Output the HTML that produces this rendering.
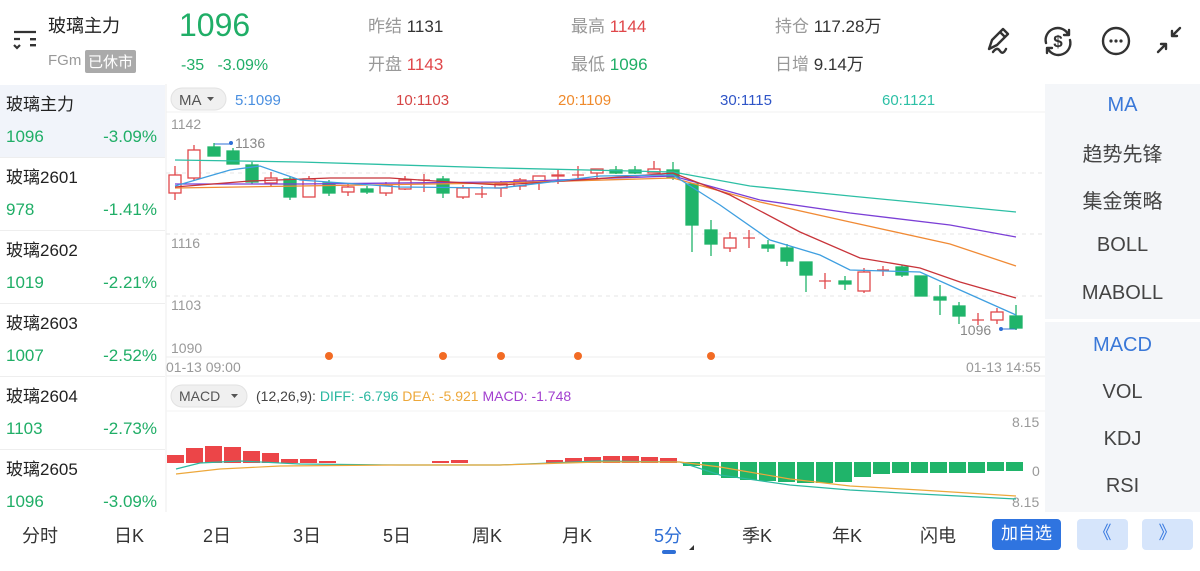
<!DOCTYPE html>
<html><head><meta charset="utf-8"><style>
*{margin:0;padding:0;box-sizing:border-box}
body{width:1200px;height:571px;background:#fff;font-family:"Liberation Sans","Noto Sans CJK SC",sans-serif;position:relative;overflow:hidden;color:#333}
.a{position:absolute;white-space:nowrap}
.g{color:#20ae67}.r{color:#e0474a}.gy{color:#999}
.sb{position:absolute;left:0;width:165px;height:73px;border-bottom:1px solid #eee}
.sb .n{position:absolute;left:6px;top:5px;font-size:17px;color:#222}
.sb .p{position:absolute;left:6px;top:42px;font-size:17px;color:#20ae67}
.sb .c{position:absolute;right:8px;top:42px;font-size:17px;color:#20ae67}
.rp{position:absolute;left:1045px;width:155px;text-align:center;font-size:20px;color:#444}
.tab{position:absolute;top:522px;font-size:18px;color:#333}
</style></head><body>
<!-- header -->
<svg class="a" style="left:12px;top:28px" width="26" height="22" viewBox="0 0 26 22"><path d="M2 4h22M2 11h6M2 17l3 3 3-3" stroke="#333" stroke-width="2.2" fill="none"/><rect x="18" y="10" width="6" height="2.4" fill="#333"/><rect x="18" y="16" width="6" height="2.4" fill="#333"/></svg>
<div class="a" style="left:48px;top:12px;font-size:18px;color:#222">玻璃主力</div>
<div class="a gy" style="left:48px;top:52px;font-size:15px">FGm</div>
<div class="a" style="left:85px;top:50px;font-size:15px;color:#fff;background:#aaa;padding:1px 3px;border-radius:2px">已休市</div>
<div class="a g" style="left:179px;top:7px;font-size:32px">1096</div>
<div class="a g" style="left:181px;top:57px;font-size:16px">-35&nbsp;&nbsp;&nbsp;-3.09%</div>
<div class="a" style="left:368px;top:12px;font-size:17px"><span class="gy">昨结</span> 1131</div>
<div class="a" style="left:368px;top:50px;font-size:17px"><span class="gy">开盘</span> <span class="r">1143</span></div>
<div class="a" style="left:571px;top:12px;font-size:17px"><span class="gy">最高</span> <span class="r">1144</span></div>
<div class="a" style="left:571px;top:50px;font-size:17px"><span class="gy">最低</span> <span class="g">1096</span></div>
<div class="a" style="left:775px;top:12px;font-size:17px"><span class="gy">持仓</span> 117.28万</div>
<div class="a" style="left:775px;top:50px;font-size:17px"><span class="gy">日增</span> 9.14万</div>
<svg class="a" style="left:985px;top:22px" width="200" height="36" viewBox="0 0 200 36">
<g stroke="#333" stroke-width="2.4" fill="none" stroke-linecap="round" stroke-linejoin="round">
<path d="M4 27l3-9 11-11 5 5-11 11zM15 10l5 5M8 30c3-4 5-4 7-1s4 2 6-2"/>
<path d="M61 21A12 12 0 0 1 83 12M84 8v5h-5"/>
<path d="M85 18A12 12 0 0 1 63 27M62 31v-5h5"/>
<circle cx="131" cy="19" r="13"/>
<path d="M173 30l8-8M176 22h5v5M195 6l-8 8M187 9v5h5"/>
</g>
<text x="73" y="25" font-size="17" font-weight="bold" fill="#333" text-anchor="middle" font-family="Liberation Sans">$</text>
<circle cx="126" cy="19" r="1.6" fill="#333"/><circle cx="131" cy="19" r="1.6" fill="#333"/><circle cx="136" cy="19" r="1.6" fill="#333"/>
</svg>
<!-- sidebar -->
<div class="sb" style="top:85px;background:#f1f4fa"><div class="n">玻璃主力</div><div class="p">1096</div><div class="c">-3.09%</div></div>
<div class="sb" style="top:158px"><div class="n">玻璃2601</div><div class="p">978</div><div class="c">-1.41%</div></div>
<div class="sb" style="top:231px"><div class="n">玻璃2602</div><div class="p">1019</div><div class="c">-2.21%</div></div>
<div class="sb" style="top:304px"><div class="n">玻璃2603</div><div class="p">1007</div><div class="c">-2.52%</div></div>
<div class="sb" style="top:377px"><div class="n">玻璃2604</div><div class="p">1103</div><div class="c">-2.73%</div></div>
<div class="sb" style="top:450px;height:62px;border:none"><div class="n">玻璃2605</div><div class="p">1096</div><div class="c">-3.09%</div></div>
<!-- right panel -->
<div class="a" style="left:1045px;top:84px;width:155px;height:428px;background:#f4f6f9"></div>
<div class="a" style="left:1045px;top:319px;width:155px;height:3px;background:#fff"></div>
<div class="rp" style="top:94px;color:#3a78d8">MA</div>
<div class="rp" style="top:138px">趋势先锋</div>
<div class="rp" style="top:185px">集金策略</div>
<div class="rp" style="top:234px">BOLL</div>
<div class="rp" style="top:282px">MABOLL</div>
<div class="rp" style="top:334px;color:#3a78d8">MACD</div>
<div class="rp" style="top:381px">VOL</div>
<div class="rp" style="top:428px">KDJ</div>
<div class="rp" style="top:475px">RSI</div>
<!-- chart -->
<svg class="a" style="left:0;top:0" width="1045" height="512" viewBox="0 0 1045 512" font-family="Liberation Sans">
<line x1="166" y1="84" x2="166" y2="512" stroke="#eee"/>
<line x1="166" y1="112" x2="1045" y2="112" stroke="#f0f0f0"/>
<g stroke="#e6e6e6" stroke-dasharray="4 4"><line x1="166" y1="234" x2="1045" y2="234"/><line x1="166" y1="296" x2="1045" y2="296"/><line x1="166" y1="173" x2="1045" y2="173"/></g>
<line x1="166" y1="357" x2="1045" y2="357" stroke="#eee"/>
<line x1="166" y1="376" x2="1045" y2="376" stroke="#eee"/>
<line x1="166" y1="411" x2="1045" y2="411" stroke="#f3f3f3"/>
<rect x="171" y="88" width="55" height="22" rx="11" fill="#f0f0f0" stroke="#e2e2e2"/>
<text x="179" y="105" font-size="15" fill="#555">MA</text><path d="M207 97h7l-3.5 4z" fill="#555"/>
<text x="235" y="105" font-size="15" fill="#4a8fe0">5:1099</text>
<text x="396" y="105" font-size="15" fill="#d64545">10:1103</text>
<text x="558" y="105" font-size="15" fill="#ef8a2c">20:1109</text>
<text x="720" y="105" font-size="15" fill="#2f55c7">30:1115</text>
<text x="882" y="105" font-size="15" fill="#2dc0a6">60:1121</text>
<g font-size="14" fill="#999"><text x="171" y="129">1142</text><text x="171" y="248">1116</text><text x="171" y="310">1103</text><text x="171" y="353">1090</text>
<text x="166" y="372">01-13 09:00</text><text x="966" y="372">01-13 14:55</text><text x="235" y="148" fill="#888">1136</text><text x="960" y="335" fill="#888">1096</text></g>
<path d="M214 148v-4h17" stroke="#2f6fd6" fill="none"/><circle cx="231" cy="143" r="2" fill="#2f6fd6"/>
<path d="M1001 329h16" stroke="#2f6fd6"/><circle cx="1001" cy="329" r="2" fill="#2f6fd6"/>
<g stroke="#e0474a" fill="#fff" stroke-width="1.3">
<path d="M175 166v34M194 145v35M271 172v14M309 176v21M348 184v12M386 182v14M405 176v14M424 174v18M463 185v14M482 186v12M501 181v16M520 178v12M539 176v14M558 170v14M578 166v14M597 172v6M654 161v12M730 232v20M749 230v18M825 273v16M864 268v25M883 266v10M978 313v12M997 308v16"/>
<rect x="169" y="175" width="12" height="18"/><rect x="188" y="150" width="12" height="28"/><rect x="265" y="178" width="12" height="5"/><rect x="303" y="179" width="12" height="18"/><rect x="342" y="187" width="12" height="5"/><rect x="380" y="185" width="12" height="8"/><rect x="399" y="180" width="12" height="9"/><rect x="457" y="188" width="12" height="9"/><rect x="495" y="184" width="12" height="4"/><rect x="514" y="180" width="12" height="6"/><rect x="533" y="176" width="12" height="6"/><rect x="552" y="175" width="12" height="1"/><rect x="591" y="169" width="12" height="4"/><rect x="648" y="169" width="12" height="4"/><rect x="724" y="238" width="12" height="10"/><rect x="858" y="272" width="12" height="19"/><rect x="991" y="312" width="12" height="8"/>
<path d="M418 180h12M437 192h12M475 194h12M572 175h12M743 238h12M819 281h12M877 270h12M972 320h12"/>
</g>
<g stroke="#20b46a" fill="#20b46a" stroke-width="1.3">
<path d="M214 143v10M233 148v16M252 162v22M290 176v24M329 180v16M367 186v8M443 176v22M616 166v8M635 166v8M673 162v18M692 184v68M711 220v36M768 240v12M787 244v22M806 262v30M845 276v14M902 265v12M940 285v30M959 302v22M1016 305v25"/>
<rect x="208" y="147" width="12" height="9"/><rect x="227" y="151" width="12" height="13"/><rect x="246" y="165" width="12" height="17"/><rect x="284" y="179" width="12" height="18"/><rect x="323" y="183" width="12" height="10"/><rect x="361" y="189" width="12" height="3"/><rect x="437" y="179" width="12" height="14"/><rect x="610" y="170" width="12" height="3"/><rect x="629" y="170" width="12" height="3"/><rect x="667" y="170" width="12" height="7"/><rect x="686" y="184" width="12" height="41"/><rect x="705" y="230" width="12" height="14"/><rect x="762" y="245" width="12" height="3"/><rect x="781" y="248" width="12" height="13"/><rect x="800" y="262" width="12" height="13"/><rect x="839" y="281" width="12" height="3"/><rect x="896" y="267" width="12" height="8"/><rect x="915" y="276" width="12" height="20"/><rect x="934" y="297" width="12" height="3"/><rect x="953" y="306" width="12" height="10"/><rect x="1010" y="316" width="12" height="12"/>
</g>
<g fill="none" stroke-width="1.3">
<polyline stroke="#2dbfa5" points="175,160 300,162 500,168 673,172 750,186 850,196 1016,212"/>
<polyline stroke="#7b3fd6" points="175,184 300,184 500,182 673,176 760,200 850,213 950,225 1016,237"/>
<polyline stroke="#f08a35" points="175,188 300,186 500,183 673,178 760,202 850,222 950,244 1016,266"/>
<polyline stroke="#c8343a" points="175,187 250,181 330,178 390,178 450,182 500,185 580,180 673,173 730,195 800,232 860,258 920,268 960,282 1016,298"/>
<polyline stroke="#3f9fe0" points="175,186 230,170 260,166 300,180 400,187 500,188 600,176 673,175 720,205 770,240 820,255 850,270 920,272 960,290 1016,315"/>
</g>
<g fill="#f26b24"><circle cx="329" cy="356" r="4"/><circle cx="443" cy="356" r="4"/><circle cx="501" cy="356" r="4"/><circle cx="578" cy="356" r="4"/><circle cx="711" cy="356" r="4"/></g>
<rect x="171" y="385" width="76" height="22" rx="11" fill="#f0f0f0" stroke="#e2e2e2"/>
<text x="179" y="401" font-size="14" fill="#555">MACD</text><path d="M231 394h7l-3.5 4z" fill="#555"/>
<text x="256" y="401" font-size="14"><tspan fill="#444">(12,26,9): </tspan><tspan fill="#2bb8a0">DIFF: -6.796 </tspan><tspan fill="#eda83b">DEA: -5.921 </tspan><tspan fill="#a23fcf">MACD: -1.748</tspan></text>
<g font-size="14" fill="#999"><text x="1012" y="427">8.15</text><text x="1032" y="476">0</text><text x="1012" y="507">8.15</text></g>
<g fill="#ec4548">
<rect x="167" y="455" width="17" height="8"/><rect x="186" y="448" width="17" height="15"/><rect x="205" y="446" width="17" height="17"/><rect x="224" y="447" width="17" height="16"/><rect x="243" y="451" width="17" height="12"/><rect x="262" y="453" width="17" height="10"/><rect x="281" y="459" width="17" height="4"/><rect x="300" y="459" width="17" height="4"/><rect x="319" y="461" width="17" height="2"/><rect x="432" y="461" width="17" height="2"/><rect x="451" y="460" width="17" height="3"/><rect x="546" y="460" width="17" height="3"/><rect x="565" y="458" width="17" height="5"/><rect x="584" y="457" width="17" height="6"/><rect x="603" y="456" width="17" height="7"/><rect x="622" y="456" width="17" height="7"/><rect x="641" y="457" width="17" height="6"/><rect x="660" y="458" width="17" height="5"/>
</g>
<g fill="#20b46a">
<rect x="683" y="462" width="17" height="4"/><rect x="702" y="462" width="17" height="13"/><rect x="721" y="462" width="17" height="16"/><rect x="740" y="462" width="17" height="18"/><rect x="759" y="462" width="17" height="19"/><rect x="778" y="462" width="17" height="20"/><rect x="797" y="462" width="17" height="21"/><rect x="816" y="462" width="17" height="21"/><rect x="835" y="462" width="17" height="20"/><rect x="854" y="462" width="17" height="15"/><rect x="873" y="462" width="17" height="12"/><rect x="892" y="462" width="17" height="11"/><rect x="911" y="462" width="17" height="11"/><rect x="930" y="462" width="17" height="11"/><rect x="949" y="462" width="17" height="11"/><rect x="968" y="462" width="17" height="11"/><rect x="987" y="462" width="17" height="9"/><rect x="1006" y="462" width="17" height="9"/>
</g>
<polyline fill="none" stroke="#2bb8a0" stroke-width="1.2" points="176,469 200,463 240,461 300,464 400,465 500,465 600,461 680,462 720,475 790,485 850,490 920,494 1016,499"/>
<polyline fill="none" stroke="#eda83b" stroke-width="1.2" points="176,474 220,469 280,466 400,465 500,465 600,462 680,462 720,467 790,479 850,486 920,490 1016,496"/>
</svg>
<div class="tab" style="left:22px">分时</div>
<div class="tab" style="left:114px">日K</div>
<div class="tab" style="left:203px">2日</div>
<div class="tab" style="left:293px">3日</div>
<div class="tab" style="left:383px">5日</div>
<div class="tab" style="left:472px">周K</div>
<div class="tab" style="left:562px">月K</div>
<div class="tab" style="left:654px;color:#2f6fd6">5分</div>
<div class="a" style="left:662px;top:550px;width:14px;height:4px;border-radius:2px;background:#2f6fd6"></div>
<div class="a" style="left:689px;top:545px;width:0;height:0;border-left:5px solid transparent;border-bottom:5px solid #333"></div>
<div class="tab" style="left:742px">季K</div>
<div class="tab" style="left:832px">年K</div>
<div class="tab" style="left:920px">闪电</div>
<div class="a" style="left:992px;top:519px;width:69px;height:31px;background:#2f74e0;border-radius:4px;color:#fff;font-size:17px;text-align:center;line-height:29px">加自选</div>
<div class="a" style="left:1077px;top:519px;width:51px;height:31px;background:#d6e5fb;border-radius:4px;color:#3b7be0;font-size:18px;text-align:center;line-height:29px">《</div>
<div class="a" style="left:1142px;top:519px;width:51px;height:31px;background:#d6e5fb;border-radius:4px;color:#3b7be0;font-size:18px;text-align:center;line-height:29px">》</div>
</body></html>
